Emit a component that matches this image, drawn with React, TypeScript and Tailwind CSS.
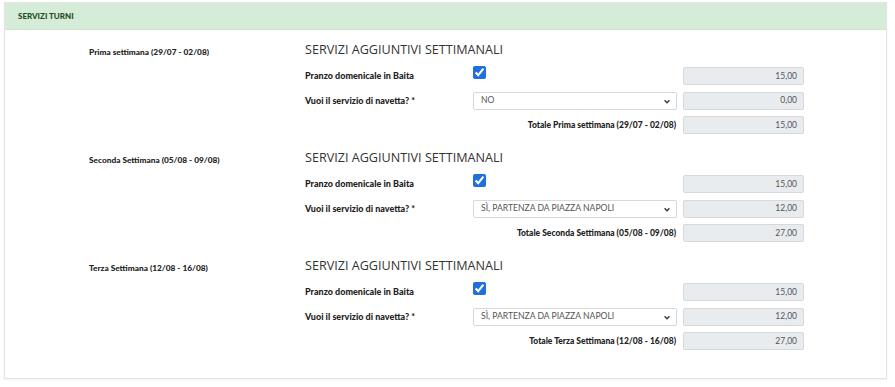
import React from "react";

const weeks = [
  {
    label: "Prima settimana (29/07 - 02/08)",
    shuttle: "NO",
    lunch: "15,00",
    shuttlePrice: "0,00",
    total: "15,00",
  },
  {
    label: "Seconda Settimana (05/08 - 09/08)",
    shuttle: "SÌ, PARTENZA DA PIAZZA NAPOLI",
    lunch: "15,00",
    shuttlePrice: "12,00",
    total: "27,00",
  },
  {
    label: "Terza Settimana (12/08 - 16/08)",
    shuttle: "SÌ, PARTENZA DA PIAZZA NAPOLI",
    lunch: "15,00",
    shuttlePrice: "12,00",
    total: "27,00",
  },
];

function Amount({ value }: { value: string }) {
  return (
    <div className="w-[121px] h-[18px] bg-[#e9ecef] border border-[#d6d9dc] rounded-[2px] flex items-center justify-end pr-[6px] text-[8.5px] text-[#555]">
      {value}
    </div>
  );
}

export default function App() {
  return (
    <div className="w-[895px] h-[387px] bg-white pt-[2px] pl-[4px] font-['Lato','Open_Sans',sans-serif]">
      <div className="w-[883px] h-[377px] border border-[#e4e4e4] shadow-[0_1px_2px_rgba(0,0,0,0.06)] bg-white">
        {/* header */}
        <div className="h-[27px] bg-[#d5ecd8] border-b border-[#cfe3d1] flex items-center pl-[13px]">
          <span className="text-[8px] font-black text-[#1f4d1c]">SERVIZI TURNI</span>
        </div>

        <div className="pt-[9px]">
          {weeks.map((w, i) => (
            <div key={i} className="flex mb-[13px]">
              <div className="w-[300px] pl-[84px] pt-[8px] text-[8.3px] font-black text-[#222] leading-[10px]">
                {w.label}
              </div>
              <div className="flex flex-col">
                <div className="h-[20px] pt-[3px] flex items-center text-[12.6px] text-[#333] font-['Open_Sans',sans-serif] leading-none">
                  SERVIZI AGGIUNTIVI SETTIMANALI
                </div>

                <div className="mt-[8px] flex flex-col gap-[6.5px]">
                  <div className="flex items-center h-[18px]">
                    <div className="w-[168px] text-[9px] font-black text-[#222]">Pranzo domenicale in Baita</div>
                    <div className="w-[210px] h-[18px] flex items-start">
                      <input
                        type="checkbox"
                        checked
                        readOnly
                        className="w-[13px] h-[13px] m-0 -mt-[1px] accent-[#1f6fe0]"
                      />
                    </div>
                    <Amount value={w.lunch} />
                  </div>

                  <div className="flex items-center h-[18px]">
                    <div className="w-[168px] text-[9px] font-black text-[#222]">Vuoi il servizio di navetta? *</div>
                    <div className="w-[210px]">
                      <div className="relative w-[204px] h-[18px] border border-[#d6d9dc] rounded-[2px] bg-white flex items-center pl-[7px] text-[8.6px] text-[#555]">
                        {w.shuttle}
                        <svg
                          className="absolute right-[6px] top-[6px] w-[6px] h-[5px] text-[#333]"
                          viewBox="0 0 10 7"
                          fill="none"
                          stroke="currentColor"
                          strokeWidth={2.2}
                        >
                          <path d="M1 1.5l4 4 4-4" />
                        </svg>
                      </div>
                    </div>
                    <Amount value={w.shuttlePrice} />
                  </div>

                  <div className="flex items-center h-[18px]">
                    <div className="w-[372px] pr-[1px] text-right text-[8.5px] font-black text-[#222]">
                      Totale {w.label}
                    </div>
                    <div className="w-[6px]" />
                    <Amount value={w.total} />
                  </div>
                </div>
              </div>
            </div>
          ))}
        </div>
      </div>
    </div>
  );
}
